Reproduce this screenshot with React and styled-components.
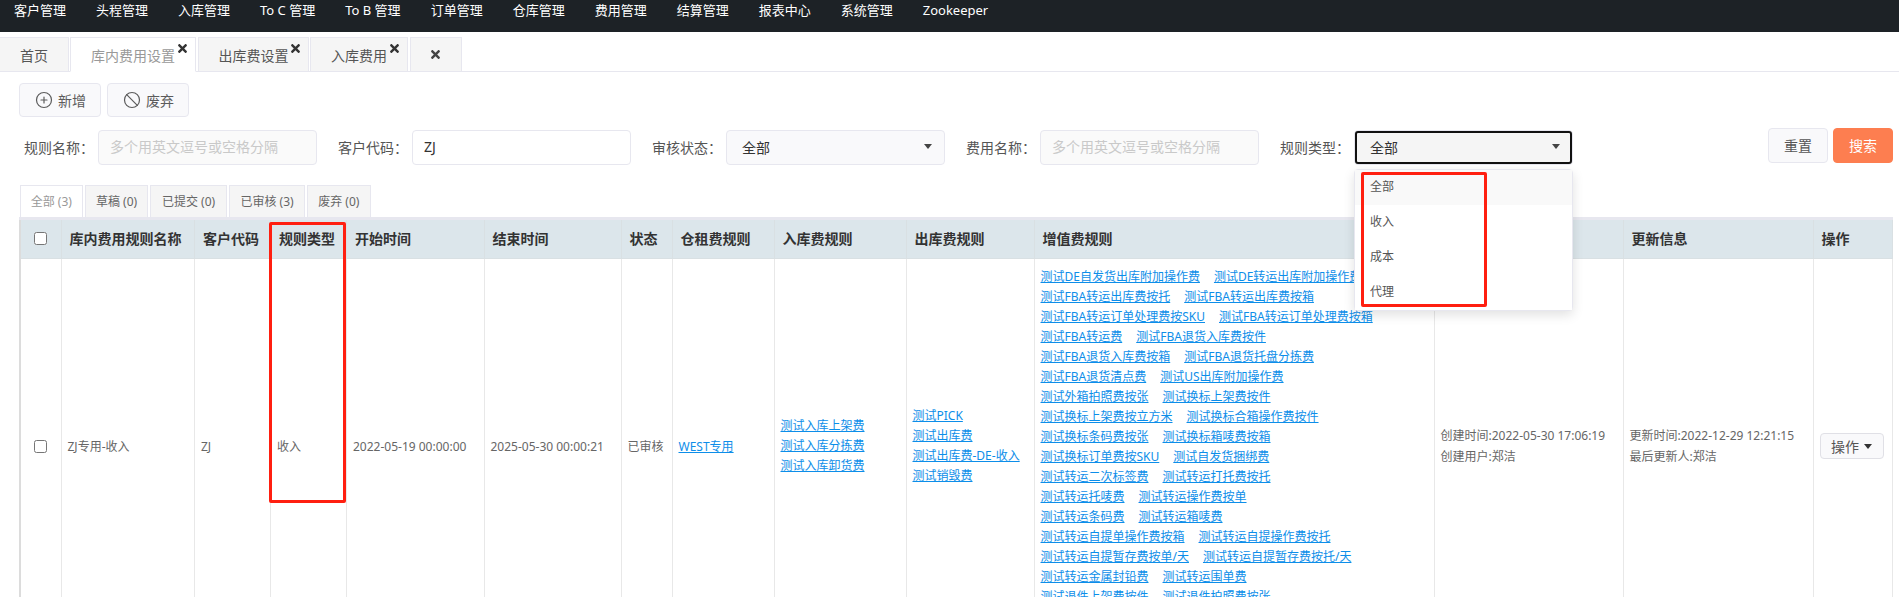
import React from 'react'
import styled, { createGlobalStyle } from 'styled-components'
import { CirclePlus, Ban } from 'lucide-react'
import { FaTimes } from 'react-icons/fa'

const GlobalStyle = createGlobalStyle`
  html, body {
    margin: 0;
    height: 597px;
    overflow: hidden;
    background: #fff;
    font-family: "Noto Sans", "Noto Sans CJK SC", sans-serif;
    color: #555;
  }
  * { box-sizing: border-box; }
`

const Page = styled.div`
  position: relative;
  width: 1899px;
  height: 597px;
  overflow: hidden;
`

// top nav
const Nav = styled.div`
  display: flex;
  gap: 30px;
  height: 32px;
  padding: 0 14px;
  background: #1d2226;
`
const NavItem = styled.a`
  color: #fff;
  font-size: 13px;
  line-height: 20px;
  white-space: nowrap;
`

// page tabs
const TabBar = styled.div`
  display: flex;
  gap: 1.5px;
  height: 35px;
  margin-top: 5px;
  border-bottom: 1px solid #e7e7ef;
`
const PageTab = styled.div`
  position: relative;
  display: flex;
  align-items: center;
  justify-content: ${p => (p.$center ? 'center' : 'flex-start')};
  width: ${p => p.$width}px;
  height: 35px;
  padding-left: ${p => (p.$center ? 0 : p.$pad)}px;
  font-size: 14px;
  color: ${p => (p.$active ? '#999' : '#555')};
  background: ${p => (p.$active ? '#fff' : '#f5f5f5')};
  border: 1px solid #e7e7ef;
  border-left-width: ${p => (p.$first ? 0 : 1)}px;
  border-bottom: ${p => (p.$active ? '1px solid #fff' : '1px solid #e7e7ef')};
`
const TabClose = styled(FaTimes)`
  position: absolute;
  top: 4px;
  right: 6px;
  color: #333;
`

// toolbar
const Toolbar = styled.div`
  display: flex;
  gap: 6px;
  padding: 11px 0 0 19px;
`
const ToolButton = styled.button`
  display: flex;
  align-items: center;
  gap: 5px;
  width: 82px;
  height: 34px;
  padding: 0 0 0 15px;
  font: inherit;
  font-size: 14px;
  color: #5c5c5c;
  background: #f9f9fb;
  border: 1px solid #e7e7ef;
  border-radius: 4px;
`

// filter row
const FilterRow = styled.div`
  display: flex;
  gap: 21.5px;
  padding: 11px 6px 0 24px;
`
const Field = styled.div`
  display: flex;
  align-items: center;
  justify-content: space-between;
  width: 292.5px;
  margin-top: 2px;
`
const FieldLabel = styled.label`
  padding-bottom: 2px;
  font-size: 14px;
  color: #555;
  white-space: nowrap;
`
const TextInput = styled.input`
  width: 218.5px;
  height: 35px;
  padding: 0 11px 2px;
  font: inherit;
  font-size: 14px;
  color: #333;
  background: ${p => (p.$plain ? '#fff' : '#fafafa')};
  border: 1px solid #e7e7ef;
  border-radius: 4px;
  outline: none;
  &::placeholder { color: #c9c9c9; }
`
const SelectBox = styled.div`
  position: relative;
  display: flex;
  align-items: center;
  justify-content: space-between;
  width: 218.5px;
  height: 35px;
  padding: 0 12px 2px 15px;
  font-size: 14px;
  color: #333;
  background: ${p => (p.$focus ? '#f5f5f5' : '#f9f9fb')};
  border: 1px solid #e7e7ef;
  border-radius: 4px;
  ${p => p.$focus && 'outline: 2px solid #111; outline-offset: -3px;'}
`
const Caret = styled.span`
  width: 0;
  height: 0;
  border-left: 4px solid transparent;
  border-right: 4px solid transparent;
  border-top: 5px solid ${p => p.$color || '#444'};
`
const FilterActions = styled.div`
  display: flex;
  gap: 5px;
  margin-left: auto;
`
const ActionButton = styled.button`
  width: 60px;
  height: 35px;
  padding: 0 0 2px;
  font: inherit;
  font-size: 14px;
  color: ${p => (p.$primary ? '#fff' : '#555')};
  background: ${p => (p.$primary ? '#fd7e50' : '#f9f9fb')};
  border: 1px solid ${p => (p.$primary ? '#fd7e50' : '#e7e7ef')};
  border-radius: 4px;
`

// status tabs
const StatusTabs = styled.div`
  display: flex;
  gap: 2px;
  height: 32px;
  margin: 20px 0 0 19.5px;
`
const StatusTab = styled.div`
  display: flex;
  align-items: center;
  justify-content: center;
  width: ${p => p.$width}px;
  padding-bottom: 2px;
  font-size: 12px;
  color: ${p => (p.$active ? '#999' : '#666')};
  background: ${p => (p.$active ? '#fff' : '#f5f5f5')};
  border: 1px solid #e7e7ef;
  border-bottom: none;
`

// table
const Table = styled.table`
  table-layout: fixed;
  width: 1873px;
  margin-left: 19px;
  border-collapse: collapse;
  border-top: 3px solid #e7e7ef;
  border-left: 2px solid #dcdcdc;
  font-size: 12px;
`
const Th = styled.th`
  height: 40px;
  padding: 0 8px 2px;
  font-size: 14px;
  font-weight: 700;
  color: #333;
  text-align: left;
  white-space: nowrap;
  background: #dce6eb;
  border: 1px solid #d9e0e3;
  border-top: none;
`
const Td = styled.td`
  padding: 7px 6px;
  color: #666;
  vertical-align: middle;
  white-space: nowrap;
  border: 1px solid #e8e8e8;
`
const AddOnTd = styled(Td)`
  padding-top: 8px;
  padding-bottom: 26px;
`
const CheckCell = styled.input`
  display: block;
  width: 13px;
  height: 13px;
  margin: 0 auto;
`
const LinkLine = styled.div`
  display: flex;
  gap: 14px;
  line-height: 20px;
`
const RuleLink = styled.a`
  color: #0d8ee9;
  text-decoration: underline;
`
const InfoLine = styled.div`
  line-height: 21px;
`
const OpButton = styled.button`
  display: flex;
  align-items: center;
  justify-content: center;
  gap: 5px;
  width: 64px;
  height: 26px;
  padding: 0;
  font: inherit;
  font-size: 14px;
  color: #555;
  background: #f9f9fb;
  border: 1px solid #e0e0e6;
  border-radius: 4px;
`

// dropdown + the red annotations over the screenshot
const Dropdown = styled.div`
  position: absolute;
  left: -1px;
  top: 37.5px;
  z-index: 5;
  width: 218.5px;
  background: #fff;
  border: 1px solid #e7e7ef;
  border-radius: 4px;
  box-shadow: 0 4px 12px rgba(0, 0, 0, 0.12);
`
const DropItem = styled.div`
  height: 35px;
  padding-left: 15px;
  font-size: 12px;
  line-height: 33px;
  color: #555;
  background: ${p => (p.$hover ? '#f9f9f9' : '#fff')};
`
const RedBox = styled.div`
  position: absolute;
  z-index: 6;
  left: ${p => p.$x}px;
  top: ${p => p.$y}px;
  width: ${p => p.$w}px;
  height: ${p => p.$h}px;
  border: 3px solid #ff1f10;
  border-radius: 2px;
`

const navItems = ['客户管理', '头程管理', '入库管理', 'To C 管理', 'To B 管理', '订单管理', '仓库管理', '费用管理', '结算管理', '报表中心', '系统管理', 'Zookeeper']

const statusTabs = [
  { label: '全部 (3)', width: 63.5, active: true },
  { label: '草稿 (0)', width: 63 },
  { label: '已提交 (0)', width: 77 },
  { label: '已审核 (3)', width: 76 },
  { label: '废弃 (0)', width: 63.5 },
]

const columns = [
  { title: '', width: 41 },
  { title: '库内费用规则名称', width: 133.5 },
  { title: '客户代码', width: 76 },
  { title: '规则类型', width: 76 },
  { title: '开始时间', width: 137.5 },
  { title: '结束时间', width: 137 },
  { title: '状态', width: 51 },
  { title: '仓租费规则', width: 102 },
  { title: '入库费规则', width: 132 },
  { title: '出库费规则', width: 128 },
  { title: '增值费规则', width: 400 },
  { title: '创建信息', width: 189 },
  { title: '更新信息', width: 190 },
  { title: '操作', width: 79.5 },
]

const addOnRules = [
  ['测试DE自发货出库附加操作费', '测试DE转运出库附加操作费'],
  ['测试FBA转运出库费按托', '测试FBA转运出库费按箱'],
  ['测试FBA转运订单处理费按SKU', '测试FBA转运订单处理费按箱'],
  ['测试FBA转运费', '测试FBA退货入库费按件'],
  ['测试FBA退货入库费按箱', '测试FBA退货托盘分拣费'],
  ['测试FBA退货清点费', '测试US出库附加操作费'],
  ['测试外箱拍照费按张', '测试换标上架费按件'],
  ['测试换标上架费按立方米', '测试换标合箱操作费按件'],
  ['测试换标条码费按张', '测试换标箱唛费按箱'],
  ['测试换标订单费按SKU', '测试自发货捆绑费'],
  ['测试转运二次标签费', '测试转运打托费按托'],
  ['测试转运托唛费', '测试转运操作费按单'],
  ['测试转运条码费', '测试转运箱唛费'],
  ['测试转运自提单操作费按箱', '测试转运自提操作费按托'],
  ['测试转运自提暂存费按单/天', '测试转运自提暂存费按托/天'],
  ['测试转运金属封铅费', '测试转运围单费'],
  ['测试退件上架费按件', '测试退件拍照费按张'],
]

const inboundRules = ['测试入库上架费', '测试入库分拣费', '测试入库卸货费']
const outboundRules = ['测试PICK', '测试出库费', '测试出库费-DE-收入', '测试销毁费']

const App = () => {
  return (
    <Page>
      <GlobalStyle />
      <Nav>
        {navItems.map(item => <NavItem key={item}>{item}</NavItem>)}
      </Nav>

      <TabBar>
        <PageTab $width={68.5} $pad={20} $first>首页</PageTab>
        <PageTab $width={126} $pad={20} $active>库内费用设置<TabClose size={13} /></PageTab>
        <PageTab $width={111} $pad={20}>出库费设置<TabClose size={13} /></PageTab>
        <PageTab $width={98} $pad={20}>入库费用<TabClose size={13} /></PageTab>
        <PageTab $width={52} $center><FaTimes size={13} color="#444" /></PageTab>
      </TabBar>

      <Toolbar>
        <ToolButton><CirclePlus size={18} strokeWidth={1.6} />新增</ToolButton>
        <ToolButton><Ban size={18} strokeWidth={1.6} />废弃</ToolButton>
      </Toolbar>

      <FilterRow>
        <Field>
          <FieldLabel>规则名称：</FieldLabel>
          <TextInput placeholder="多个用英文逗号或空格分隔" readOnly />
        </Field>
        <Field>
          <FieldLabel>客户代码：</FieldLabel>
          <TextInput $plain value="ZJ" readOnly />
        </Field>
        <Field>
          <FieldLabel>审核状态：</FieldLabel>
          <SelectBox>全部<Caret /></SelectBox>
        </Field>
        <Field>
          <FieldLabel>费用名称：</FieldLabel>
          <TextInput placeholder="多个用英文逗号或空格分隔" readOnly />
        </Field>
        <Field>
          <FieldLabel>规则类型：</FieldLabel>
          <SelectBox $focus>
            全部<Caret />
            <Dropdown>
              <DropItem $hover>全部</DropItem>
              <DropItem>收入</DropItem>
              <DropItem>成本</DropItem>
              <DropItem>代理</DropItem>
            </Dropdown>
          </SelectBox>
        </Field>
        <FilterActions>
          <ActionButton>重置</ActionButton>
          <ActionButton $primary>搜索</ActionButton>
        </FilterActions>
      </FilterRow>

      <StatusTabs>
        {statusTabs.map(tab => (
          <StatusTab key={tab.label} $width={tab.width} $active={tab.active}>{tab.label}</StatusTab>
        ))}
      </StatusTabs>

      <Table>
        <colgroup>
          {columns.map((col, i) => <col key={i} width={col.width} />)}
        </colgroup>
        <thead>
          <tr>
            {columns.map((col, i) => (
              <Th key={i}>{i === 0 ? <CheckCell type="checkbox" /> : col.title}</Th>
            ))}
          </tr>
        </thead>
        <tbody>
          <tr>
            <Td><CheckCell type="checkbox" /></Td>
            <Td>ZJ专用-收入</Td>
            <Td>ZJ</Td>
            <Td>收入</Td>
            <Td>2022-05-19 00:00:00</Td>
            <Td>2025-05-30 00:00:21</Td>
            <Td>已审核</Td>
            <Td><RuleLink>WEST专用</RuleLink></Td>
            <Td>
              {inboundRules.map(name => <LinkLine key={name}><RuleLink>{name}</RuleLink></LinkLine>)}
            </Td>
            <Td>
              {outboundRules.map(name => <LinkLine key={name}><RuleLink>{name}</RuleLink></LinkLine>)}
            </Td>
            <AddOnTd>
              {addOnRules.map(pair => (
                <LinkLine key={pair[0]}>
                  <RuleLink>{pair[0]}</RuleLink>
                  <RuleLink>{pair[1]}</RuleLink>
                </LinkLine>
              ))}
            </AddOnTd>
            <Td>
              <InfoLine>创建时间:2022-05-30 17:06:19</InfoLine>
              <InfoLine>创建用户:郑洁</InfoLine>
            </Td>
            <Td>
              <InfoLine>更新时间:2022-12-29 12:21:15</InfoLine>
              <InfoLine>最后更新人:郑洁</InfoLine>
            </Td>
            <Td><OpButton>操作<Caret $color="#333" /></OpButton></Td>
          </tr>
        </tbody>
      </Table>

      <RedBox $x={269} $y={222} $w={77} $h={281} />
      <RedBox $x={1361} $y={172} $w={126} $h={135} />
    </Page>
  )
}

export default App
